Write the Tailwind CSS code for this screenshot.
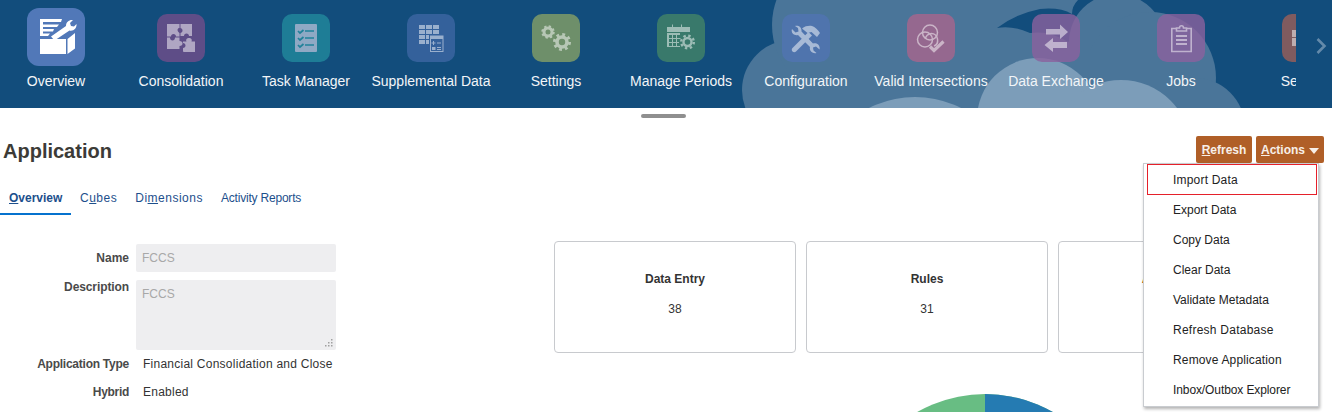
<!DOCTYPE html>
<html lang="en">
<head>
<meta charset="UTF-8">
<title>Application</title>
<script src="https://cdn.jsdelivr.net/npm/@tailwindcss/browser@4"></script>
</head>
<body class="h-[412px] overflow-hidden bg-white font-['Liberation_Sans',Arial,sans-serif] text-[12px]">

<!-- springboard -->
<header class="relative flex h-[108px] bg-[#124d7c] overflow-hidden">
  <svg class="absolute left-0 top-0" width="1332" height="108" viewBox="0 0 1332 108">
    <g fill="#4a7599">
      <circle cx="792" cy="90" r="50"/>
      <circle cx="845" cy="25" r="73"/>
      <rect x="800" y="0" width="290" height="108"/>
    </g>
    <path fill="#124d7c" d="M997 28Q1015 14 1040 9Q1060 7 1072 14Q1072 6 1078 0L1100 0L1085 30L1068 42Q1050 30 1030 33Q1012 25 997 28Z"/>
    <g fill="#4a7599">
      <circle cx="1117" cy="42" r="48"/>
      <circle cx="1150" cy="78" r="66"/>
      <circle cx="1195" cy="128" r="50"/>
      <rect x="1069" y="50" width="100" height="58"/>
    </g>
    <g fill="#7c9db9">
      <circle cx="1038" cy="119" r="61"/>
      <circle cx="1121" cy="150" r="70"/>
      <circle cx="915" cy="199" r="102"/>
    </g>
  </svg>

  <nav class="relative flex w-[1296px] shrink-0 overflow-hidden">
    <div class="flex -ml-[6.5px]">
      <a class="flex w-[125px] shrink-0 flex-col items-center text-[14px] text-[#f2f5f8]">
        <span class="mt-2 mb-[7px] flex h-[58px] w-[58px] items-center justify-center rounded-[12px] bg-[#6283c7]/80">
          <svg width="58" height="58" viewBox="0 0 58 58" fill="#fff">
            <path d="M13 31h26v15H13zM40.500 31l7.500-6v15.500l-7.500 5.500z"/>
            <path d="M13 11h22l-1 3H16v2.500h16l-2 2.500H16v2h11l-1 2.500H16v2h7l-2 2.500h-8z"/>
            <path d="M24 28.500l15-10.500c0-4 3-6.500 7-6l-3 3 1 3 3 .5 2.500-2.500c.5 4-3 7.500-7 6.500L27.500 32.500z"/>
          </svg>
        </span>
        <span class="leading-4">Overview</span>
      </a>
      <a class="flex w-[125px] shrink-0 flex-col items-center text-[14px] text-[#f2f5f8]">
        <span class="mt-[14px] mb-[11px] flex h-12 w-12 items-center justify-center rounded-[10px] bg-[#724d8a]/80">
          <svg class="opacity-50" width="48" height="48" viewBox="0 0 48 48" fill="#fff">
            <path d="M10 10h12.500v4c-2 0-2.500 2-1.500 3.500s1.500 1.500 1.500 1.500v3.500h-3.500c0-1.500-1-2.500-2.500-2.500s-2.500 1-2.500 2.500H10z"/>
            <path d="M23.500 10H35v12h-3c0-1.500-1-2.500-2.500-2.500S27 20.500 27 22h-3.500v-3c1.500-.5 2-1.500 2-2.500s-.5-2-2-2.500z"/>
            <path d="M10 23.500h3c0 2 1 3 2.500 3s2.500-1 2.500-3h4.500V27c2 0 3 1 3 2.500s-1 2.500-3 2.500v3H10z"/>
            <path d="M26 27.500h3.500c-1-2 .5-3.500 2.500-3.500s3.500 1.500 2.500 3.500H38V38H27c-.5 0-1-.5-1-1v-3c1.500 0 2.500-1 2.500-2.500S27.500 29 26 29z"/>
          </svg>
        </span>
        <span class="leading-4">Consolidation</span>
      </a>
      <a class="flex w-[125px] shrink-0 flex-col items-center text-[14px] text-[#f2f5f8]">
        <span class="mt-[14px] mb-[11px] flex h-12 w-12 items-center justify-center rounded-[10px] bg-[#22899c]/80">
          <svg width="48" height="48" viewBox="0 0 48 48">
            <rect x="13" y="10" width="22" height="28" rx="1" fill="#8fa9c4"/>
            <g fill="none" stroke="#22829a" stroke-width="1.700">
              <path d="M16 17l2 2 3.500-3M16 24l2 2 3.500-3M16 31l2 2 3.500-3M23 17h9M23 24h9M23 31h9"/>
            </g>
          </svg>
        </span>
        <span class="leading-4">Task Manager</span>
      </a>
      <a class="flex w-[125px] shrink-0 flex-col items-center text-[14px] text-[#f2f5f8]">
        <span class="mt-[14px] mb-[11px] flex h-12 w-12 items-center justify-center rounded-[10px] bg-[#3d66a2]/80">
          <svg class="opacity-50" width="48" height="48" viewBox="0 0 48 48" fill="#fff">
            <path d="M12 11h6v4h-6zM19 11h6v4h-6zM26 11h6v4h-6zM12 16h6v4h-6zM19 16h6v4h-6zM26 16h6v4h-6zM12 21h6v4h-6zM19 21h3v4h-3zM12 26h6v4h-6zM19 26h3v4h-3z"/>
            <path fill-rule="evenodd" d="M23 21.500h13.500V38H23zM24 25h11.500v12H24z"/>
            <path d="M26 27h1v1.500h1.500v1H27V31h-1v-1.500h-1.500v-1H26zM30 28.500h4v1h-4zM25 33h3.500v3H25zM30 33h4v1h-4zM30 35h4v1h-4z"/>
          </svg>
        </span>
        <span class="leading-4 whitespace-nowrap">Supplemental Data</span>
      </a>
      <a class="flex w-[125px] shrink-0 flex-col items-center text-[14px] text-[#f2f5f8]">
        <span class="mt-[14px] mb-[11px] flex h-12 w-12 items-center justify-center rounded-[10px] bg-[#86a065]/80">
          <svg class="opacity-50" width="48" height="48" viewBox="0 0 48 48" fill="none" stroke="#fff">
            <circle cx="16" cy="18" r="4" stroke-width="3"/>
            <circle cx="16" cy="18" r="5.500" stroke-width="2.500" stroke-dasharray="2.200 2.120"/>
            <circle cx="30" cy="28" r="5" stroke-width="3.600"/>
            <circle cx="30" cy="28" r="7.500" stroke-width="3" stroke-dasharray="2.800 3.090"/>
          </svg>
        </span>
        <span class="leading-4">Settings</span>
      </a>
      <a class="flex w-[125px] shrink-0 flex-col items-center text-[14px] text-[#f2f5f8]">
        <span class="mt-[14px] mb-[11px] flex h-12 w-12 items-center justify-center rounded-[10px] bg-[#448566]/80">
          <svg class="opacity-50" width="48" height="48" viewBox="0 0 48 48">
            <path fill="#fff" d="M10 13h5v-2.500h1V13h8v-2.500h1V13h8v5H10zM10 19h13v2h-3v3h4l-1 1h-3v3h2v1h-2v3h3v1H10zM12 21v3h3v-3zM16 21v3h3v-3zM12 25v3h3v-3zM16 25v3h3v-3zM12 29v3h3v-3zM16 29v3h3v-3z"/>
            <circle cx="30.500" cy="28" r="4" fill="none" stroke="#fff" stroke-width="2.400"/>
            <circle cx="30.500" cy="28" r="6.300" fill="none" stroke="#fff" stroke-width="2.400" stroke-dasharray="2.400 2.550"/>
          </svg>
        </span>
        <span class="leading-4 whitespace-nowrap">Manage Periods</span>
      </a>
      <a class="flex w-[125px] shrink-0 flex-col items-center text-[14px] text-[#f2f5f8]">
        <span class="mt-[14px] mb-[11px] flex h-12 w-12 items-center justify-center rounded-[10px] bg-[#5074b1]/80">
          <svg class="opacity-50" width="48" height="48" viewBox="0 0 48 48" fill="#fff">
            <path d="M10.500 34l16-16 3.500 3.500-16 16c-1 1-2.500 1-3.500 0s-1-2.500 0-3.500z"/>
            <path d="M20 14.500c3-2.500 7-3 10-2.500 3 1 6 4 8 7l-3 4-5.500-5-4 1z"/>
            <path d="M10 15l3.500 3.500 3-1-.5-3.500 -3-2c3.500-1 7 1.500 6.500 5.500l11.500 12c4-1 7.500 2 6.500 6l-3.500-3-3 1 .5 3 3 2.500c-4 1-7.500-2-6.500-6L16 21c-4 1-7.500-2-6-6z"/>
          </svg>
        </span>
        <span class="leading-4">Configuration</span>
      </a>
      <a class="flex w-[125px] shrink-0 flex-col items-center text-[14px] text-[#f2f5f8]">
        <span class="mt-[14px] mb-[11px] flex h-12 w-12 items-center justify-center rounded-[10px] bg-[#a7658c]/80">
          <svg class="opacity-50" width="48" height="48" viewBox="0 0 48 48" fill="none" stroke="#fff">
            <circle cx="23" cy="18.500" r="7.500" stroke-width="1.500"/>
            <circle cx="18" cy="25.500" r="7.500" stroke-width="1.500"/>
            <path d="M27 32c3-1 4-4 3.500-7-.5-3-3-5.500-6-5.500-3.500 0-6 3-6 5.500" stroke-width="1.500"/>
            <path d="M23 32.500l4 4 9.500-9" stroke-width="3.200"/>
          </svg>
        </span>
        <span class="leading-4 whitespace-nowrap">Valid Intersections</span>
      </a>
      <a class="flex w-[125px] shrink-0 flex-col items-center text-[14px] text-[#f2f5f8]">
        <span class="mt-[14px] mb-[11px] flex h-12 w-12 items-center justify-center rounded-[10px] bg-[#8b619e]/80">
          <svg class="opacity-50" width="48" height="48" viewBox="0 0 48 48" fill="#fff">
            <path d="M14 15h14v-4.500l8 7.500-8 7v-4.500H14z"/>
            <path d="M35 28H21v-4l-8.500 7 8.500 7v-4h14z"/>
          </svg>
        </span>
        <span class="leading-4 whitespace-nowrap">Data Exchange</span>
      </a>
      <a class="flex w-[125px] shrink-0 flex-col items-center text-[14px] text-[#f2f5f8]">
        <span class="mt-[14px] mb-[11px] flex h-12 w-12 items-center justify-center rounded-[10px] bg-[#8b619e]/80">
          <svg class="opacity-50" width="48" height="48" viewBox="0 0 48 48" fill="none" stroke="#fff" stroke-width="1.600">
            <path d="M19 14.500h-4.200v23h19.400v-23H30"/>
            <path d="M19.500 17v-3h3c0-3 4-3 4 0h3v3z"/>
            <path d="M19 22h11M19 26h11M19 30h11" stroke-width="2"/>
          </svg>
        </span>
        <span class="leading-4">Jobs</span>
      </a>
      <a class="flex w-[125px] shrink-0 flex-col items-center text-[14px] text-[#f2f5f8]">
        <span class="mt-[14px] mb-[11px] flex h-12 w-12 items-center justify-center rounded-[10px] bg-[#9c5f58]/80">
          <svg class="opacity-50" width="48" height="48" viewBox="0 0 48 48" fill="#fff">
            <path d="M10 16h8v7h-8zM10 24h8v8h-8z"/>
          </svg>
        </span>
        <span class="leading-4">Security</span>
      </a>
    </div>
  </nav>
  <svg class="relative ml-[20px] mt-[38px]" width="11" height="16" viewBox="0 0 11 16" fill="none" stroke="#648aaa" stroke-width="2.600">
    <path d="M1.500 1l7 7-7 7"/>
  </svg>
</header>

<main class="relative pt-[6px]">
  <div class="mx-auto h-1 w-[45px] rounded-full bg-[#8f8f8f] relative left-[-2.500px]"></div>

  <div class="flex items-start justify-between h-[27px] mt-[18px] pl-[3px] pr-2">
    <h1 class="text-[20px] font-bold leading-[30px] text-[#3c3b37]">Application</h1>
    <div class="flex gap-1">
      <button class="h-[27px] w-14 rounded-[2px] bg-[#b05f27] text-[12px] font-bold text-[#f7efe8]"><span class="underline">R</span>efresh</button>
      <button class="flex h-[27px] w-[68px] items-center justify-center gap-1 rounded-[2px] bg-[#b05f27] text-[12px] font-bold text-[#f7efe8]">
        <span><span class="underline">A</span>ctions</span>
        <span class="mt-[2px] h-0 w-0 border-x-[5.500px] border-t-[6px] border-x-transparent border-t-[#f7efe8]"></span>
      </button>
    </div>
  </div>

  <div class="flex">
    <div class="w-[554px] shrink-0">
      <div class="mt-[24px] flex h-[28px] text-[12px] text-[#1d4f8c]">
        <a class="h-[28px] w-[71px] border-b-2 border-[#0572ce] pl-[9px] pt-[2px] font-semibold"><span class="underline">O</span>verview</a>
        <a class="pl-[9px] pt-[2px] tracking-[0.5px]"><span>C</span><span class="underline">u</span>bes</a>
        <a class="pl-[18px] pt-[2px] tracking-[0.5px]"><span>Di</span><span class="underline">m</span>ensions</a>
        <a class="pl-[18px] pt-[2px] tracking-[-0.2px]">Activity Reports</a>
      </div>
      <div class="mt-[29px] grid grid-cols-[129px_200px] gap-x-[7px]">
        <div class="pt-[5px] text-right font-bold text-[#4a4a4a]">Name</div>
        <div class="h-7 rounded-[2px] bg-[#eeeef0] pl-[6px] pt-[5px] text-[#a8a8a8]">FCCS</div>
        <div class="mt-[6px] text-right font-bold tracking-[-0.1px] text-[#4a4a4a]">Description</div>
        <div class="relative mt-2 h-[70px] rounded-[2px] bg-[#eeeef0] pl-[6px] pt-[5px] text-[#a8a8a8]">FCCS
          <svg class="absolute bottom-[3px] right-[3px]" width="8" height="8" viewBox="0 0 8 8" fill="#a0a0a0">
            <path d="M6 0h1.500v1.500H6zM3 3h1.500v1.500H3zM6 3h1.500v1.500H6zM0 6h1.500v1.500H0zM3 6h1.500v1.500H3zM6 6h1.500v1.500H6z"/>
          </svg>
        </div>
        <div class="mt-[5px] text-right font-bold tracking-[-0.25px] text-[#4a4a4a]">Application Type</div>
        <div class="mt-[5px] pl-[7px] whitespace-nowrap tracking-[0.25px] text-[#333]">Financial Consolidation and Close</div>
        <div class="mt-[10px] text-right font-bold tracking-[-0.3px] text-[#4a4a4a]">Hybrid</div>
        <div class="mt-[10px] pl-[7px] tracking-[0.25px] text-[#333]">Enabled</div>
      </div>
    </div>

    <div class="grow">
      <div class="mt-[78px] flex gap-[10px]">
        <div class="h-[112px] w-[242px] shrink-0 rounded-[4px] border border-[#c8cace] pt-[30px] text-center text-[#333]">
          <div class="font-bold leading-[14px]">Data Entry</div>
          <div class="mt-4 leading-[14px]">38</div>
        </div>
        <div class="h-[112px] w-[242px] shrink-0 rounded-[4px] border border-[#c8cace] pt-[30px] text-center text-[#333]">
          <div class="font-bold leading-[14px]">Rules</div>
          <div class="mt-4 leading-[14px]">31</div>
        </div>
        <div class="h-[112px] w-[242px] shrink-0 rounded-[4px] border border-[#c8cace] pl-[4px] pt-[30px] text-center text-[#333]">
          <div class="font-bold leading-[14px] text-[#b05f27]">Approval Unit</div>
        </div>
      </div>
      <div class="ml-[294px] mt-[41px] h-[18px] overflow-hidden">
        <svg width="274" height="274" viewBox="0 0 274 274">
          <circle cx="137" cy="137" r="137" fill="#68bd83"/>
          <path fill="#257bb2" d="M137 137V0a137 137 0 0 1 137 137z"/>
        </svg>
      </div>
    </div>
  </div>

  <!-- actions menu -->
  <ul class="absolute left-[1143px] top-[55px] h-[244px] w-[176px] border border-[#c9ccd0] bg-white shadow-[1px_2px_3px_rgba(0,0,0,0.3)] text-[#222]">
    <li class="ml-[3px] flex h-[31px] w-[170px] items-center border border-[#e5202a] pl-[25px] tracking-[0.2px]">Import Data</li>
    <li class="flex h-[30px] items-center pl-[29px]">Export Data</li>
    <li class="flex h-[30px] items-center pl-[29px]">Copy Data</li>
    <li class="flex h-[30px] items-center pl-[29px]">Clear Data</li>
    <li class="flex h-[30px] items-center pl-[29px]">Validate Metadata</li>
    <li class="flex h-[30px] items-center pl-[29px] tracking-[0.25px]">Refresh Database</li>
    <li class="flex h-[30px] items-center pl-[29px] tracking-[0.15px]">Remove Application</li>
    <li class="flex h-[30px] items-center pl-[29px] tracking-[-0.1px]">Inbox/Outbox Explorer</li>
  </ul>
</main>
</body>
</html>
